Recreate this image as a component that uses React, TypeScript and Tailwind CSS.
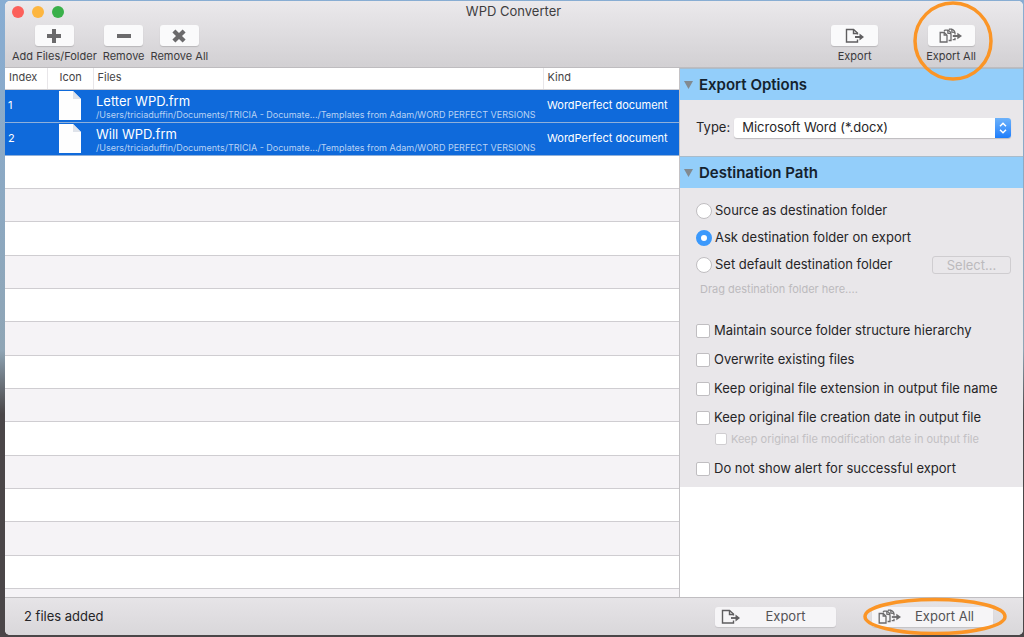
import { useId, useState, type ReactNode } from "react";

const files = [
  { name: "Letter WPD.frm", kind: "WordPerfect document" },
  { name: "Will WPD.frm", kind: "WordPerfect document" },
];

const filePath =
  "/Users/triciaduffin/Documents/TRICIA - Documate.../Templates from Adam/WORD PERFECT VERSIONS";

function PlusIcon() {
  return (
    <svg width="14" height="14" viewBox="0 0 14 14" fill="#6b6a6c" aria-hidden="true">
      <path d="M5 0h4v5h5v4H9v5H5V9H0V5h5z" />
    </svg>
  );
}

function MinusIcon() {
  return (
    <svg width="14" height="14" viewBox="0 0 14 14" fill="#6b6a6c" aria-hidden="true">
      <path d="M0 5h14v4H0z" />
    </svg>
  );
}

function CrossIcon() {
  return (
    <svg width="14" height="14" viewBox="0 0 14 14" fill="#6b6a6c" aria-hidden="true">
      <path d="M3.4.4 7 4 10.600.4 13.600 3.400 10 7l3.600 3.600-3 3L7 10l-3.600 3.600-3-3L4 7 .4 3.400z" />
    </svg>
  );
}

function ExportIcon() {
  return (
    <svg width="20" height="16" viewBox="0 0 20 16" fill="none" stroke="#5f5e60" strokeWidth="1.400" aria-hidden="true">
      <path d="M12.500 6.500V5L8.500 1.500H1.500v12.500h11v-2.500" />
      <path d="M8.500 1.500V5.500h4" />
      <path d="M10 9h6" strokeWidth="1.800" />
      <path d="M14.500 5.500l4.500 3.500-4.500 3.500z" fill="#5f5e60" stroke="none" />
    </svg>
  );
}

function ExportAllIcon() {
  return (
    <svg width="24" height="16" viewBox="0 0 24 16" fill="none" stroke="#6b6a6c" strokeWidth="1.300" aria-hidden="true">
      <path d="M1.200 4.500H5.200L8 7.200v6.800H1.200z" />
      <path d="M5.200 4.500v2.700H8" />
      <path d="M5 3.200l1-1H8.500q3.300 1 3.500 4v6.300H9.600" />
      <path d="M8.500 2.200q.6 1.300.4 3l2.800.3" />
      <path d="M9.800 1.700l.6-.6H12.500q3.300 1 3.500 4v1.400M16 9.700v2H13.700" />
      <path d="M12.500 1.100q.6 1.300.4 3l2.800.3" />
      <path d="M13.800 8h6" strokeWidth="1.800" />
      <path d="M18.300 4.800 23 8l-4.700 3.200z" fill="#6b6a6c" stroke="none" />
    </svg>
  );
}

function DocumentIcon() {
  return (
    <svg className="mx-auto block" width="22" height="29" viewBox="0 0 22 29" aria-hidden="true">
      <path d="M0 0h14l8 8v21H0z" fill="#fefefe" />
      <path d="M14 0v8h8z" fill="#dfe3ea" />
    </svg>
  );
}

function ToolButton({ label, wide, children }: { label: string; wide?: boolean; children: ReactNode }) {
  return (
    <button type="button" className="flex flex-col items-center gap-0.5 text-[11px] leading-4 text-[#3b3a3c]">
      <span
        className={
          "flex h-[21px] items-center justify-center rounded-[3px] bg-[#fafafb] shadow-[0_1px_1px_#b9b7ba] " +
          (wide ? "w-[47px]" : "w-[39px]")
        }
      >
        {children}
      </span>
      <span className="whitespace-nowrap">{label}</span>
    </button>
  );
}

function SectionHeader({ title, open, onToggle }: { title: string; open: boolean; onToggle: () => void }) {
  return (
    <h2>
      <button
        type="button"
        aria-expanded={open}
        onClick={onToggle}
        className="flex h-8 w-full items-center gap-1.5 border-t border-[#a9bccb] bg-[#93cefa] pl-1 text-[15px] leading-5 font-semibold text-[#14222e]"
      >
        <svg width="9" height="8" viewBox="0 0 9 8" fill="#828a90" aria-hidden="true">
          <path d="M0 0h9L4.500 8z" />
        </svg>
        {title}
      </button>
    </h2>
  );
}

function Radio({ label, checked, onChange }: { label: string; checked: boolean; onChange: () => void }) {
  return (
    <label className="flex h-[27px] items-center gap-[3px] text-[13px] text-[#262527]">
      <input
        type="radio"
        name="destination"
        checked={checked}
        onChange={onChange}
        className="size-4 appearance-none rounded-full border border-[#c0bec1] bg-white checked:border-[5px] checked:border-[#3b99fc]"
      />
      {label}
    </label>
  );
}

const checkboxBox =
  "appearance-none border bg-white checked:border-[#3b99fc] checked:bg-[#3b99fc]";

function Check({ label }: { label: string }) {
  return (
    <label className="flex h-[29px] items-center gap-1 text-[13px] text-[#262527]">
      <input type="checkbox" className={checkboxBox + " size-3.5 rounded-[2px] border-[#c0bec1]"} />
      {label}
    </label>
  );
}

const headCell = "border-b border-[#cfcdd0] font-normal text-left";

export default function App() {
  const typeId = useId();
  const [optionsOpen, setOptionsOpen] = useState(true);
  const [pathOpen, setPathOpen] = useState(true);
  const [destination, setDestination] = useState(1);

  return (
    <div className="flex min-h-screen bg-linear-to-b from-[#88add3] from-0% via-[#8fa5b5] via-55% to-[#4a4648] to-65% pt-px pr-px pb-0.5 pl-[5px] font-['Inter','Liberation_Sans',sans-serif]">
      <div className="flex min-w-0 flex-1 flex-col overflow-hidden rounded-[5px] bg-white">
        <header className="border-b border-[#bebcbf] bg-linear-to-b from-[#ebe9ec] to-[#d2d0d3]">
          <div className="grid h-[22px] grid-cols-[1fr_auto_1fr] items-center pr-2 pl-[7px]">
            <div className="flex gap-2">
              <button type="button" aria-label="Close" className="size-3 rounded-full bg-[#fc605b]" />
              <button type="button" aria-label="Minimize" className="size-3 rounded-full bg-[#fdb640]" />
              <button type="button" aria-label="Zoom" className="size-3 rounded-full bg-[#3ab04a]" />
            </div>
            <h1 className="text-[13px] text-[#3e3d3f]">WPD Converter</h1>
          </div>
          <div className="flex items-start justify-between pt-0.5 pr-[47px] pb-[3px] pl-[7px]">
            <div className="flex gap-1.5">
              <ToolButton label="Add Files/Folder">
                <PlusIcon />
              </ToolButton>
              <ToolButton label="Remove">
                <MinusIcon />
              </ToolButton>
              <ToolButton label="Remove All">
                <CrossIcon />
              </ToolButton>
            </div>
            <div className="flex gap-12">
              <ToolButton label="Export" wide>
                <ExportIcon />
              </ToolButton>
              <div className="relative">
                <ToolButton label="Export All" wide>
                  <ExportAllIcon />
                </ToolButton>
                <svg
                  className="pointer-events-none absolute -top-6 left-1/2 z-10 -ml-[38px]"
                  width="80"
                  height="80"
                  viewBox="0 0 80 80"
                  fill="none"
                  aria-hidden="true"
                >
                  <circle cx="40" cy="40" r="38" stroke="#fb9526" strokeWidth="3.500" />
                </svg>
              </div>
            </div>
          </div>
        </header>

        <main className="flex flex-1">
          <section className="flex min-w-0 flex-1 flex-col" aria-label="Files">
            <table className="w-full table-fixed border-collapse">
              <colgroup>
                <col className="w-[42px]" />
                <col className="w-[46px]" />
                <col />
                <col className="w-[136px]" />
              </colgroup>
              <thead>
                <tr className="h-[21px] text-[11px] leading-4 text-[#454446]">
                  <th className={headCell + " pt-0 pb-0.5 pl-1"}>Index</th>
                  <th className={headCell + " border-x border-x-[#e8e6e9] pt-0 pb-0.5 pl-3"}>Icon</th>
                  <th className={headCell + " pt-0 pb-0.5 pl-1"}>Files</th>
                  <th className={headCell + " border-l border-l-[#e8e6e9] pt-0 pb-0.5 pl-1"}>Kind</th>
                </tr>
              </thead>
              <tbody>
                {files.map((file, i) => (
                  <tr key={file.name} className="h-[33px] border-b border-[#8fb0da] bg-[#0f6adb] text-white">
                    <td className="p-0 pl-[3px] text-[11px]">{i + 1}</td>
                    <td className="p-0">
                      <DocumentIcon />
                    </td>
                    <td className="overflow-hidden p-0 pl-[3px] whitespace-nowrap">
                      <div className="pt-0.5 text-[13px] leading-4">{file.name}</div>
                      <div className="text-[9px] leading-3 text-[#b9d2f4]">{filePath}</div>
                    </td>
                    <td className="p-0 pl-1 text-[11px] whitespace-nowrap">{file.kind}</td>
                  </tr>
                ))}
              </tbody>
            </table>
            <div className="flex flex-1 flex-col" aria-hidden="true">
              {Array.from({ length: 13 }, (_, i) => (
                <div key={i} className="min-h-8 flex-1 border-b border-[#cfcdd1] odd:bg-white even:bg-[#f5f3f6]" />
              ))}
              <div className="h-2 bg-[#f5f3f6]" />
            </div>
          </section>

          <aside className="w-[344px] shrink-0 border-l border-[#c4c2c5]">
            <SectionHeader title="Export Options" open={optionsOpen} onToggle={() => setOptionsOpen(!optionsOpen)} />
            {optionsOpen && (
              <div className="flex h-14 items-center gap-1 bg-[#e9e7ea] pr-3 pl-4">
                <label htmlFor={typeId} className="text-[13px] text-[#262527]">
                  Type:
                </label>
                <div className="relative flex flex-1">
                  <select
                    id={typeId}
                    className="h-5 w-full appearance-none rounded-[3px] bg-white pl-2 text-[13px] text-[#262527] shadow-[0_1px_1px_#bdbbbe]"
                  >
                    <option>Microsoft Word (*.docx)</option>
                  </select>
                  <span className="pointer-events-none absolute inset-y-0 right-0 flex w-4 items-center justify-center rounded-r-[3px] bg-linear-to-b from-[#6cb2fa] to-[#1b7dfb]">
                    <svg width="8" height="12" viewBox="0 0 8 12" fill="none" stroke="#fff" strokeWidth="1.500" aria-hidden="true">
                      <path d="M1 4.200 4 1.200l3 3M1 7.800l3 3 3-3" />
                    </svg>
                  </span>
                </div>
              </div>
            )}
            <SectionHeader title="Destination Path" open={pathOpen} onToggle={() => setPathOpen(!pathOpen)} />
            {pathOpen && (
              <div className="bg-[#e9e7ea] pt-[9px] pr-3 pb-1 pl-4">
                <Radio label="Source as destination folder" checked={destination === 0} onChange={() => setDestination(0)} />
                <Radio label="Ask destination folder on export" checked={destination === 1} onChange={() => setDestination(1)} />
                <div className="flex items-center justify-between">
                  <Radio label="Set default destination folder" checked={destination === 2} onChange={() => setDestination(2)} />
                  <button
                    type="button"
                    disabled
                    className="h-[18px] w-[79px] rounded-[3px] border border-[#cfcdd0] text-[13px] leading-4 text-[#bcbabd]"
                  >
                    Select...
                  </button>
                </div>
                <p className="pl-1 text-[11px] leading-[22px] text-[#bcbabd]">Drag destination folder here....</p>
                <div className="pt-4">
                  <Check label="Maintain source folder structure hierarchy" />
                  <Check label="Overwrite existing files" />
                  <Check label="Keep original file extension in output file name" />
                  <Check label="Keep original file creation date in output file" />
                  <label className="mb-2 flex h-3.5 items-center gap-1 pl-[19px] text-[11px] text-[#c2c0c3]">
                    <input type="checkbox" disabled className={checkboxBox + " size-3 rounded-[2px] border-[#d0ced1]"} />
                    Keep original file modification date in output file
                  </label>
                  <Check label="Do not show alert for successful export" />
                </div>
              </div>
            )}
          </aside>
        </main>

        <footer className="flex h-[38px] items-center justify-between border-t border-[#c0bec1] bg-linear-to-b from-[#e6e4e7] to-[#d9d7da] pr-[30px] pl-[19px] text-[13px] text-[#262527]">
          <p>2 files added</p>
          <div className="flex gap-9">
            <button type="button" className="flex h-5 w-[121px] items-center rounded-[3px] bg-[#f6f5f7] pl-1.5 text-[#545355] shadow-[0_1px_1px_#c4c2c5]">
              <ExportIcon />
              <span className="flex-1 pr-1.5 text-center">Export</span>
            </button>
            <div className="relative">
              <button type="button" className="flex h-5 w-[121px] items-center rounded-[3px] bg-[#f6f5f7] pl-1.5 text-[#545355] shadow-[0_1px_1px_#c4c2c5]">
                <ExportAllIcon />
                <span className="flex-1 pr-1.5 text-center">Export All</span>
              </button>
              <svg
                className="pointer-events-none absolute -top-[10px] -left-[9px] z-10"
                width="144"
                height="39"
                viewBox="0 0 144 39"
                fill="none"
                aria-hidden="true"
              >
                <ellipse cx="72" cy="19.500" rx="70" ry="17" stroke="#fb9526" strokeWidth="3.500" />
              </svg>
            </div>
          </div>
        </footer>
      </div>
    </div>
  );
}
